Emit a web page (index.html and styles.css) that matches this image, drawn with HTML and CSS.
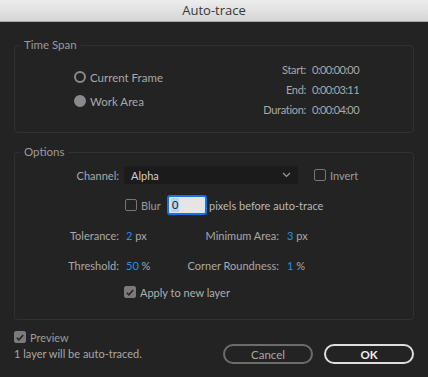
FILE: index.html
```html
<!DOCTYPE html>
<html lang="en">
  <head>
    <meta charset="UTF-8" />
    <meta name="viewport" content="width=device-width, initial-scale=1.0" />
    <title>Auto-trace</title>
    <link rel="stylesheet" href="styles.css">
  </head>
  <body>
    <div class="titlebar">Auto-trace</div>
    <main class="dialog">
      <fieldset class="group">
        <legend>Time Span</legend>
        <div class="timespan">
          <div class="radios">
            <label class="radio-row"><span class="radio"></span>Current Frame</label>
            <label class="radio-row"><span class="radio checked"></span>Work Area</label>
          </div>
          <div class="times">
            <span class="time-label">Start:</span><span class="time-value">0:00:00:00</span>
            <span class="time-label">End:</span><span class="time-value">0:00:03:11</span>
            <span class="time-label">Duration:</span><span class="time-value">0:00:04:00</span>
          </div>
        </div>
      </fieldset>

      <fieldset class="group options">
        <legend>Options</legend>
        <div class="row channel-row">
          <span class="label">Channel:</span>
          <div class="select">
            <span>Alpha</span>
            <svg width="9" height="6" viewBox="0 0 9 6"><path d="M1 1 L4.5 4.5 L8 1" fill="none" stroke="#9a9a9a" stroke-width="1.2"/></svg>
          </div>
          <span class="checkbox invert-box"></span>
          <span class="check-text">Invert</span>
        </div>
        <div class="row blur-row">
          <span class="checkbox"></span>
          <span class="check-text blur-text">Blur</span>
          <div class="num-input"><span class="selected">0</span></div>
          <span class="plain">pixels before auto-trace</span>
        </div>
        <div class="row stat-row">
          <span class="label">Tolerance:</span>
          <span class="stat-value"><b>2</b> px</span>
          <span class="label2">Minimum Area:</span>
          <span class="stat-value"><b>3</b> px</span>
        </div>
        <div class="row stat-row">
          <span class="label">Threshold:</span>
          <span class="stat-value"><b>50</b> %</span>
          <span class="label2">Corner Roundness:</span>
          <span class="stat-value"><b>1</b> %</span>
        </div>
        <div class="row apply-row">
          <span class="checkbox checked">
            <svg width="11" height="11" viewBox="0 0 11 11"><path d="M2 5.8 L4.3 8 L9 2.8" fill="none" stroke="#262626" stroke-width="1.8"/></svg>
          </span>
          <span class="check-text light">Apply to new layer</span>
        </div>
      </fieldset>

      <div class="footer">
        <div class="footer-left">
          <div class="preview-row">
            <span class="checkbox checked">
              <svg width="11" height="11" viewBox="0 0 11 11"><path d="M2 5.8 L4.3 8 L9 2.8" fill="none" stroke="#262626" stroke-width="1.8"/></svg>
            </span>
            <span class="check-text">Preview</span>
          </div>
          <div class="note">1 layer will be auto-traced.</div>
        </div>
        <div class="buttons">
          <button class="btn cancel">Cancel</button>
          <button class="btn ok">OK</button>
        </div>
      </div>
    </main>
  </body>
</html>
```

FILE: styles.css
```css
body {
  margin: 0;
  background-color: #232323;
  font-family: Lato, "Open Sans", sans-serif;
  font-size: 11px;
  color: #a8a8a8;
}

.titlebar {
  height: 21px;
  line-height: 21px;
  text-align: center;
  font-family: "Open Sans", sans-serif;
  font-size: 13px;
  color: #383838;
  background: linear-gradient(#ededed, #d5d5d5);
  border-bottom: 1px solid #a9a9a9;
}

.dialog {
  padding: 16px 14px 0 14px;
}

.group {
  margin: 0;
  padding: 7px 0 13px 0;
  border: 1px solid #313131;
  border-radius: 4px;
}

.group legend {
  margin-left: 5px;
  padding: 0 4px;
  line-height: 14px;
  font-size: 11.5px;
  color: #9a9a9a;
}

.timespan {
  display: flex;
  align-items: center;
  padding-left: 59px;
}

.radios {
  width: 172px;
  display: flex;
  flex-direction: column;
  gap: 10px;
}

.radio-row {
  display: flex;
  align-items: center;
  gap: 4px;
  height: 14px;
  font-size: 11.5px;
}

.radio {
  width: 8px;
  height: 8px;
  border: 2px solid #8a8a8a;
  border-radius: 50%;
}

.radio.checked {
  background-color: #8a8a8a;
}

.times {
  display: grid;
  grid-template-columns: 60px auto;
  column-gap: 6px;
  grid-auto-rows: 20px;
  align-items: center;
}

.time-label {
  text-align: right;
  letter-spacing: -0.3px;
}

.time-value {
  letter-spacing: -0.6px;
}

.options {
  margin-top: 12px;
  padding-bottom: 17px;
}

.row {
  display: flex;
  align-items: center;
}

.label {
  width: 104px;
  text-align: right;
  margin-right: 5px;
}

.select {
  width: 160px;
  height: 18px;
  padding: 0 7px;
  display: flex;
  align-items: center;
  justify-content: space-between;
  background-color: #1b1b1b;
  border-radius: 3px;
  color: #d0d0d0;
}

.checkbox {
  width: 10px;
  height: 10px;
  border: 1.5px solid #767676;
  border-radius: 2px;
  display: flex;
  align-items: center;
  justify-content: center;
}

.checkbox.checked {
  background-color: #7a7a7a;
  border-color: #7a7a7a;
}

.invert-box {
  margin-left: 16px;
}

.check-text {
  margin-left: 4px;
  color: #9c9c9c;
}

.check-text.light {
  color: #b0b0b0;
}

.channel-row {
  height: 18px;
}

.blur-row {
  margin-top: 11px;
  padding-left: 110px;
  height: 20px;
}

.blur-text {
  width: 26px;
}

.num-input {
  width: 32px;
  height: 16px;
  padding: 0 2px;
  background-color: #e5e5e5;
  border: 2px solid #1473e6;
  border-radius: 3px;
  display: flex;
  align-items: center;
  color: #1f1f1f;
}

.num-input .selected {
  background-color: #b3d3f7;
  padding: 0 1px;
  line-height: 14px;
}

.plain {
  margin-left: 2px;
  color: #b8b8b8;
}

.stat-row {
  height: 20px;
  margin-top: 10px;
}

.stat-row .label {
  margin-right: 7px;
}

.stat-value {
  width: 49px;
}

.stat-value b {
  font-weight: normal;
  color: #2b8ee8;
}

.label2 {
  width: 104px;
  text-align: right;
  margin-right: 8px;
}

.apply-row {
  height: 20px;
  margin-top: 7px;
  padding-left: 109px;
}

.footer {
  display: flex;
  align-items: flex-end;
  justify-content: space-between;
  margin-top: 10px;
}

.footer-left {
  padding-bottom: 3px;
}

.preview-row {
  display: flex;
  align-items: center;
  height: 14px;
}

.note {
  margin-top: 3px;
  line-height: 14px;
  color: #a8a8a8;
}

.buttons {
  display: flex;
  gap: 11px;
}

.btn {
  width: 90px;
  height: 20px;
  border-radius: 10px;
  background: transparent;
  font-family: inherit;
  font-size: 11.5px;
  padding: 0;
}

.cancel {
  border: 2px solid #6c6c6c;
  color: #a8a8a8;
}

.ok {
  border: 2px solid #dedede;
  color: #f0f0f0;
  font-weight: 700;
}
```
